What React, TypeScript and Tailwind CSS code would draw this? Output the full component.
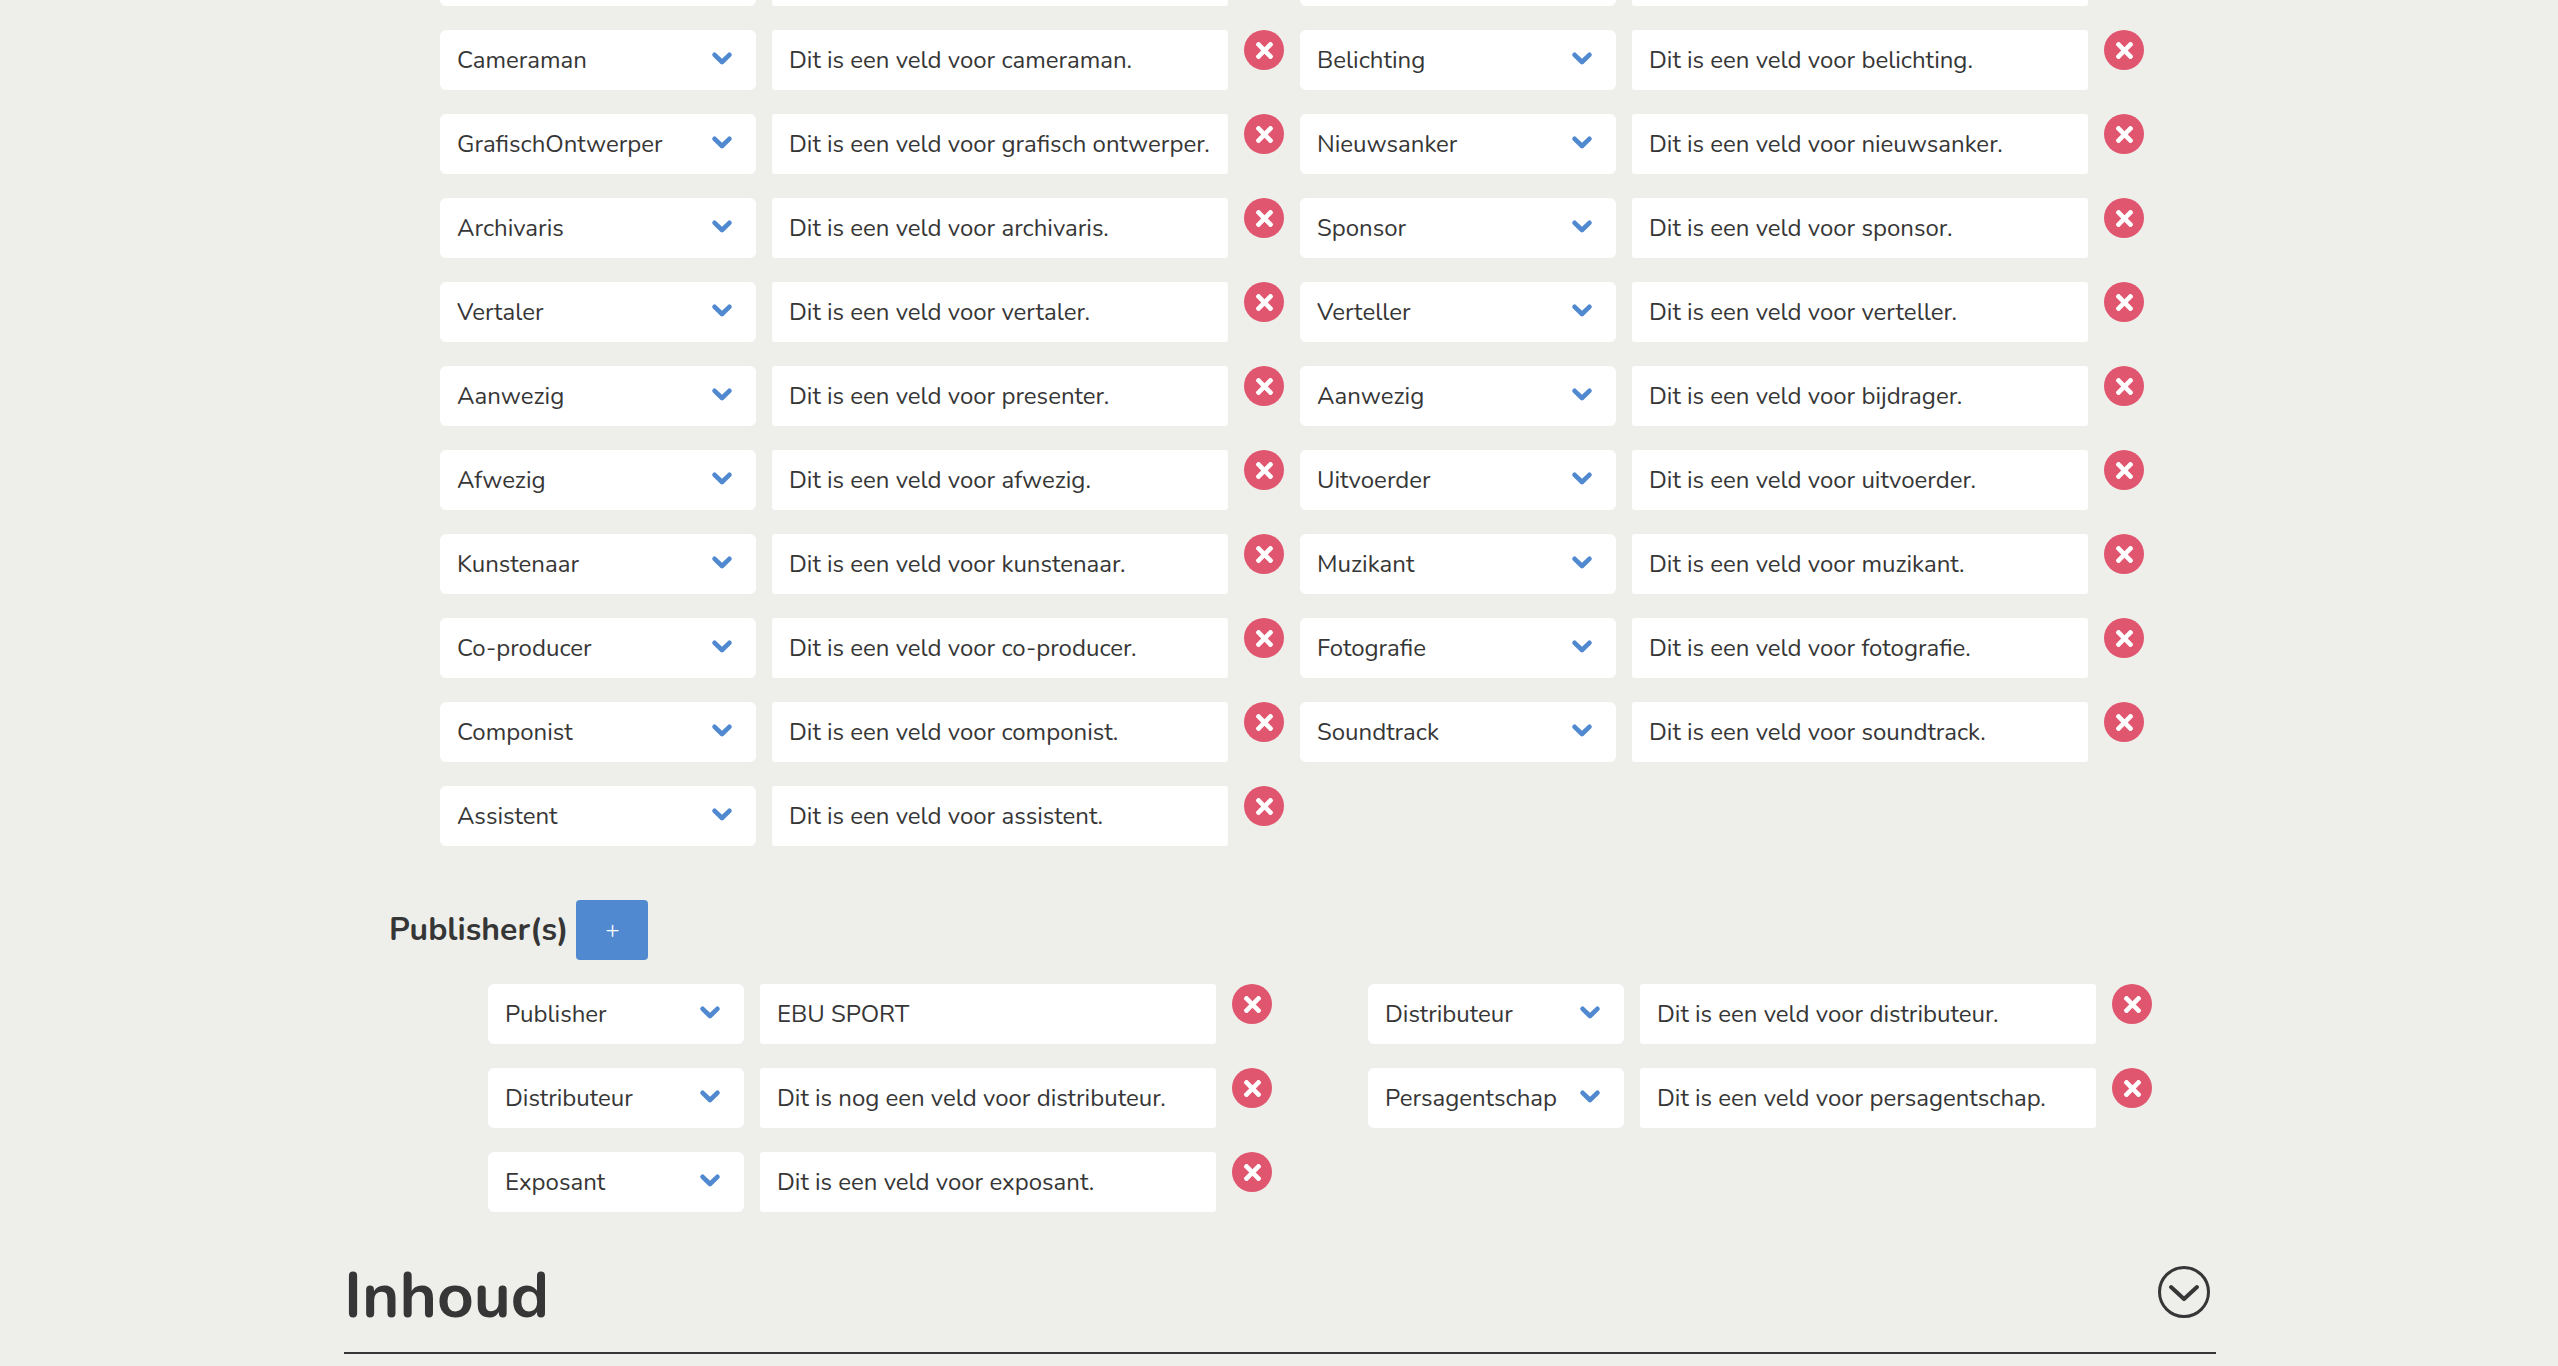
import { FaTimes } from "react-icons/fa";

const crew: [string, string, string, string][] = [
  ["Cameraman", "cameraman", "Belichting", "belichting"],
  ["GrafischOntwerper", "grafisch ontwerper", "Nieuwsanker", "nieuwsanker"],
  ["Archivaris", "archivaris", "Sponsor", "sponsor"],
  ["Vertaler", "vertaler", "Verteller", "verteller"],
  ["Aanwezig", "presenter", "Aanwezig", "bijdrager"],
  ["Afwezig", "afwezig", "Uitvoerder", "uitvoerder"],
  ["Kunstenaar", "kunstenaar", "Muzikant", "muzikant"],
  ["Co-producer", "co-producer", "Fotografie", "fotografie"],
  ["Componist", "componist", "Soundtrack", "soundtrack"],
];

function Chevron() {
  return (
    <svg width="20" height="13" viewBox="0 0 20 13" fill="none" stroke="#5089d0" strokeWidth="4.6" strokeLinecap="round" strokeLinejoin="round" className="-mt-[3px] shrink-0">
      <path d="M2.6 2.8 L10 10 L17.4 2.8" />
    </svg>
  );
}

function Field({ label, value, selectWidth }: { label: string; value: string; selectWidth: string }) {
  return (
    <div className="flex items-start">
      <div className={`${selectWidth} h-[60px] flex items-center justify-between rounded-[6px] bg-white pl-[17px] pr-[24px]`}>
        <span className="whitespace-nowrap">{label}</span>
        <Chevron />
      </div>
      <div className="ml-[16px] w-[456px] h-[60px] flex items-center rounded-[3px] bg-white pl-[17px]">
        <span className="whitespace-nowrap">{value}</span>
      </div>
      <button className="ml-[16px] w-[40px] h-[40px] flex items-center justify-center rounded-full bg-[#e0566f] text-white">
        <FaTimes className="text-[25px]" />
      </button>
    </div>
  );
}

export default function App() {
  return (
    <div className="h-[1366px] overflow-hidden bg-[#eeefeb] text-[#363636] text-[24px] font-['Nunito','Lato','Noto_Sans',sans-serif]">
      <div className="ml-[344px] w-[1872px]">
        {/* rij die boven de rand valt */}
        <div className="-mt-[54px] ml-[96px] flex">
          <div className="w-[316px] h-[60px] rounded-[6px] bg-white" />
          <div className="ml-[16px] w-[456px] h-[60px] rounded-[3px] bg-white" />
          <div className="ml-[72px] w-[316px] h-[60px] rounded-[6px] bg-white" />
          <div className="ml-[16px] w-[456px] h-[60px] rounded-[3px] bg-white" />
        </div>

        <div className="mt-[24px] ml-[96px] flex flex-col gap-[24px]">
          {crew.map(([a, b, c, d]) => (
            <div key={a + c} className="flex gap-[16px]">
              <Field label={a} value={`Dit is een veld voor ${b}.`} selectWidth="w-[316px]" />
              <Field label={c} value={`Dit is een veld voor ${d}.`} selectWidth="w-[316px]" />
            </div>
          ))}
          <div className="flex gap-[16px]">
            <Field label="Assistent" value="Dit is een veld voor assistent." selectWidth="w-[316px]" />
          </div>
        </div>

        <div className="mt-[54px] ml-[45px] flex items-center gap-[8px]">
          <h3 className="text-[32px] font-bold">Publisher(s)</h3>
          <button className="w-[72px] h-[60px] rounded-[4px] bg-[#5089d0] text-white text-[24px] font-light">+</button>
        </div>

        <div className="mt-[24px] ml-[144px] grid grid-cols-[784px_784px] gap-x-[96px] gap-y-[24px]">
          <Field label="Publisher" value="EBU SPORT" selectWidth="w-[256px]" />
          <Field label="Distributeur" value="Dit is een veld voor distributeur." selectWidth="w-[256px]" />
          <Field label="Distributeur" value="Dit is nog een veld voor distributeur." selectWidth="w-[256px]" />
          <Field label="Persagentschap" value="Dit is een veld voor persagentschap." selectWidth="w-[256px]" />
          <Field label="Exposant" value="Dit is een veld voor exposant." selectWidth="w-[256px]" />
        </div>

        <div className="mt-[36px] h-[106px] flex items-start justify-between border-b-2 border-[#363636] pr-[6px]">
          <h2 className="pt-[16px] text-[64px] font-bold leading-none">Inhoud</h2>
          <svg width="52" height="52" viewBox="0 0 52 52" fill="none" stroke="#363636" strokeLinecap="round" strokeLinejoin="round" className="mt-[18px]">
            <circle cx="26" cy="26" r="24.5" strokeWidth="3" />
            <path d="M13 21 L26 33 L39 21" strokeWidth="4" />
          </svg>
        </div>
      </div>
    </div>
  );
}
